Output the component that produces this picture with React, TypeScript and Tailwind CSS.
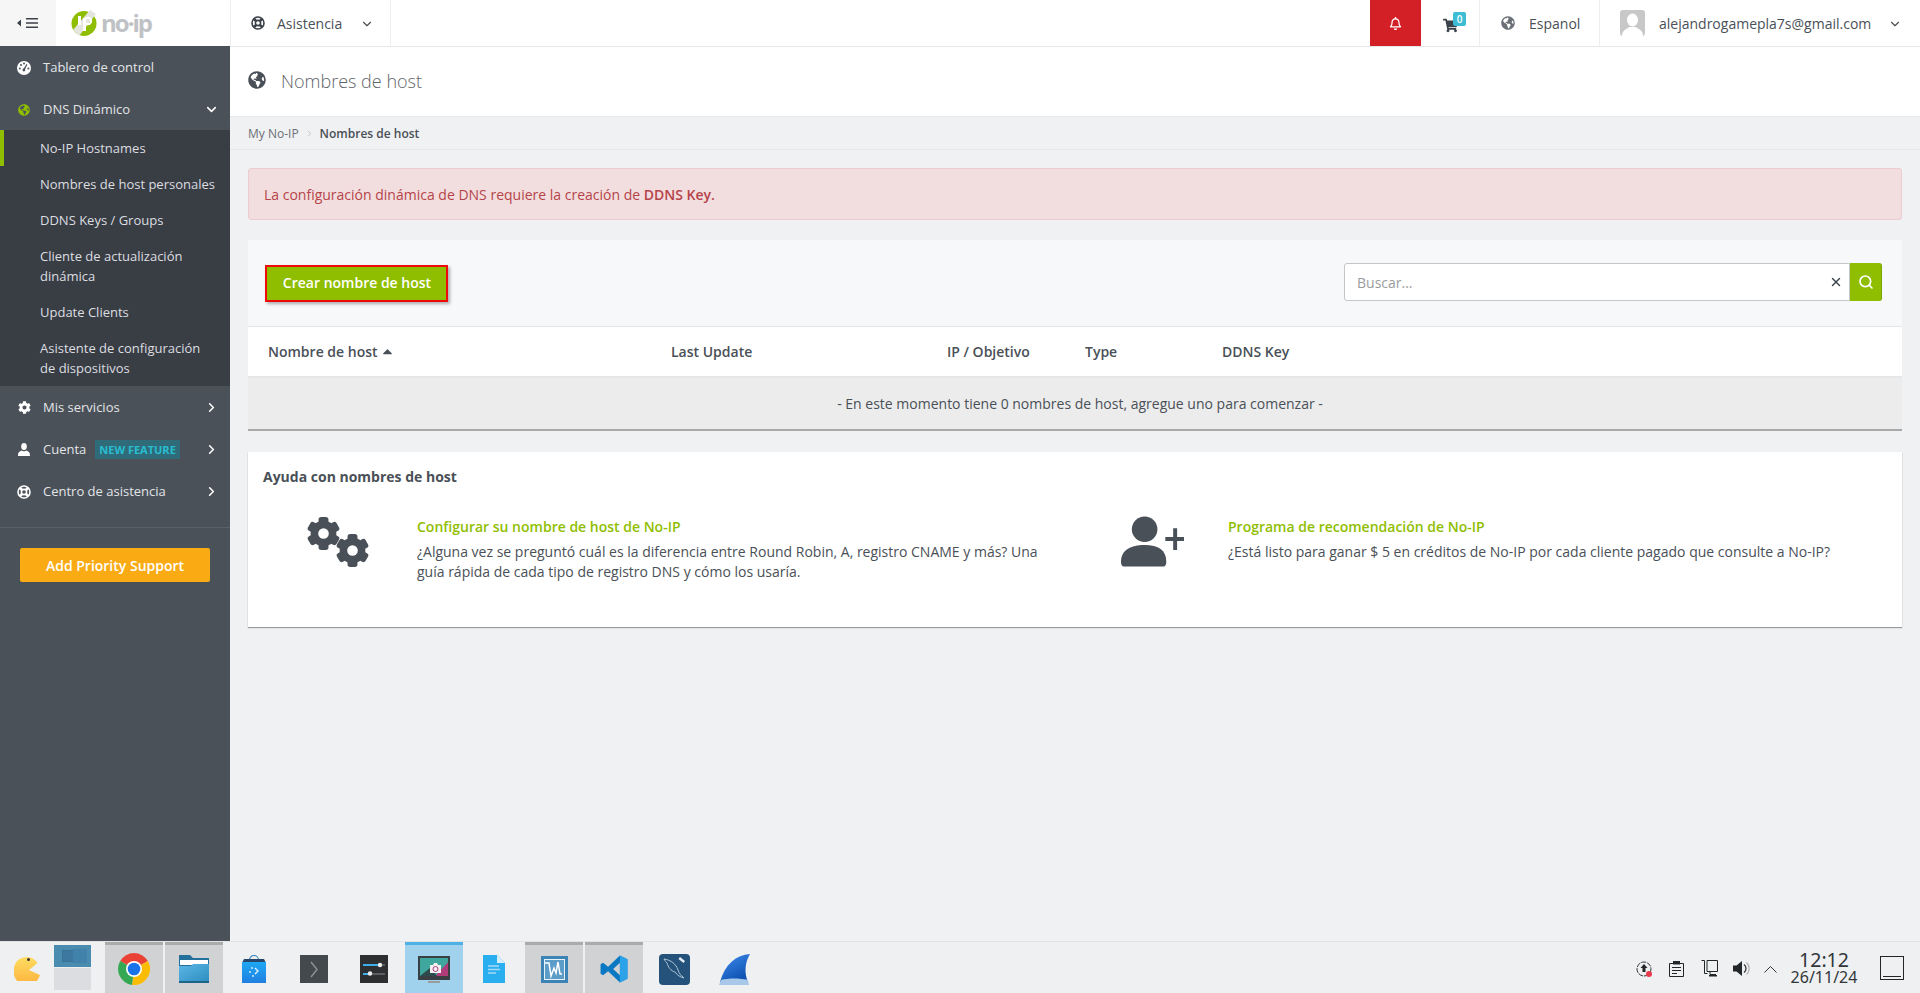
import { FaGlobeAmericas, FaCog, FaRegBell, FaShoppingCart, FaCaretUp } from 'react-icons/fa'
import { FiChevronDown, FiChevronRight, FiSearch, FiX } from 'react-icons/fi'

const subItems = [
  { label: 'No-IP Hostnames', active: true },
  { label: 'Nombres de host personales' },
  { label: 'DDNS Keys / Groups' },
  { label: 'Cliente de actualización dinámica', tall: true },
  { label: 'Update Clients' },
  { label: 'Asistente de configuración de dispositivos', tall: true },
]

function RingIcon({ size = 14 }: { size?: number }) {
  return (
    <svg width={size} height={size} viewBox="0 0 14 14" fill="none" stroke="currentColor">
      <circle cx="7" cy="7" r="6" strokeWidth="1.6" />
      <circle cx="7" cy="7" r="2.6" strokeWidth="1.6" />
      <path d="M3 3l2.200 2.200M11 3L8.800 5.200M3 11l2.200-2.200M11 11L8.800 8.800" strokeWidth="2.6" />
    </svg>
  )
}

function GaugeIcon() {
  return (
    <svg width="14" height="14" viewBox="0 0 14 14">
      <circle cx="7" cy="7" r="7" fill="currentColor" />
      <path d="M6.200 8.500L9.500 3l.9.5L7.600 9.200z" fill="#4a5159" />
      <circle cx="6.900" cy="9" r="1.400" fill="#4a5159" />
      <circle cx="2.800" cy="7.400" r="1" fill="#4a5159" />
      <circle cx="4" cy="4" r="1" fill="#4a5159" />
      <circle cx="7" cy="2.600" r="1" fill="#4a5159" />
      <circle cx="11.400" cy="7.400" r="1" fill="#4a5159" />
    </svg>
  )
}

function UserIcon() {
  return (
    <svg width="12" height="13" viewBox="0 0 12 13" fill="currentColor">
      <ellipse cx="6" cy="3.600" rx="2.800" ry="3.500" />
      <path d="M0 13c0-3 .6-4.500 3.600-5.600.8 1 4 1 4.800 0C11.400 8.500 12 10 12 13z" />
    </svg>
  )
}

function MenuRow({ icon, label, chevron, badge }: { icon: React.ReactNode, label: string, chevron?: 'down' | 'right', badge?: string }) {
  return (
    <div className="h-[42px] pt-[1px] flex items-center text-[13px] text-[#e3e5e7]">
      <div className="w-[43px] flex justify-center pl-[6px] pr-[1px] text-white">{icon}</div>
      <span>{label}</span>
      {badge && (
        <span className="ml-[9px] px-[4px] h-[19px] leading-[19px] bg-[#2f6b78] text-[#29bdd2] text-[11px] font-bold">{badge}</span>
      )}
      <div className="ml-auto mr-[11px] text-white">
        {chevron === 'down' && <FiChevronDown size={15} strokeWidth={2.5} />}
        {chevron === 'right' && <FiChevronRight size={15} strokeWidth={2.5} />}
      </div>
    </div>
  )
}

function Sidebar() {
  return (
    <aside className="w-[230px] shrink-0 bg-[#4a5159]">
      <MenuRow icon={<GaugeIcon />} label="Tablero de control" />
      <MenuRow icon={<FaGlobeAmericas size={12} className="text-[#8fbe00]" />} label="DNS Dinámico" chevron="down" />
      <div className="bg-[#393d44]">
        {subItems.map((item) => (
          <div
            key={item.label}
            className={`pr-[14px] text-[13px] leading-[20px] text-[#dcdee0] flex items-center ${item.tall ? 'h-[56px]' : 'h-[36px]'} ${item.active ? 'border-l-4 border-[#8fbe00] pl-[36px]' : 'pl-[40px]'}`}
          >
            {item.label}
          </div>
        ))}
      </div>
      <MenuRow icon={<FaCog size={13} />} label="Mis servicios" chevron="right" />
      <MenuRow icon={<UserIcon />} label="Cuenta" chevron="right" badge="NEW FEATURE" />
      <MenuRow icon={<RingIcon />} label="Centro de asistencia" chevron="right" />
      <div className="mt-[15px] border-t border-[#5a6169] px-[20px] pt-[20px]">
        <div className="h-[34px] pt-[1px] rounded-[2px] bg-[#faab14] text-white text-[14px] font-semibold flex items-center justify-center">
          Add Priority Support
        </div>
      </div>
    </aside>
  )
}

function Logo() {
  return (
    <div className="w-[174px] flex items-center pl-[15px]">
      <svg width="26" height="27" viewBox="0 0 26 27">
        <circle cx="13" cy="13.500" r="12.500" fill="#8fbe00" />
        <path d="M2 20 L19 0 L25 4 L8 26 Z" fill="#e4e6de" />
        <path d="M8.500 6v9M13.500 8v13" stroke="#fff" strokeWidth="3" />
        <circle cx="17" cy="11" r="3.200" fill="none" stroke="#fff" strokeWidth="2" />
      </svg>
      <span className="ml-[4px] text-[24px] leading-none tracking-[-2px] text-[#bfc2c5] font-bold">no·ip</span>
    </div>
  )
}

function Header() {
  return (
    <header className="h-[46px] shrink-0 flex bg-white text-[14px] text-[#4a5057]">
      <div className="w-[56px] bg-[#f6f6f6] flex items-center justify-center gap-[2px]">
        <svg width="22" height="12" viewBox="0 0 22 12">
          <path d="M0 6l4-3.500v7z M9 1h12v1.600H9z M9 5.200h12v1.600H9z M9 9.400h12v1.600H9z" fill="#3c424a" />
        </svg>
      </div>
      <Logo />
      <div className="w-[161px] border-x border-[#eeeeee] flex items-center pl-[20px]">
        <span className="text-[#3c424a]"><RingIcon /></span>
        <span className="ml-[12px]">Asistencia</span>
        <FiChevronDown size={14} className="ml-[18px] mt-[2px]" />
      </div>
      <div className="ml-auto w-[51px] bg-[#d32027] flex items-center justify-center text-white">
        <FaRegBell size={13} />
      </div>
      <div className="w-[59px] flex items-center justify-center border-r border-[#eeeeee] relative">
        <FaShoppingCart size={15} className="text-[#3c424a] mt-[4px]" />
        <span className="absolute left-[32px] top-[12px] w-[13px] h-[14px] rounded-[2px] bg-[#3dbcd4] text-white text-[10px] font-semibold leading-[14px] text-center">0</span>
      </div>
      <div className="w-[120px] border-r border-[#eeeeee] flex items-center pl-[21px]">
        <FaGlobeAmericas size={14} className="text-[#6b7076]" />
        <span className="ml-[14px]">Espanol</span>
      </div>
      <div className="w-[320px] flex items-center pl-[20px]">
        <div className="w-[25px] h-[26px] rounded-[3px] bg-[#c8c8c8] overflow-hidden">
          <svg width="25" height="26" viewBox="0 0 25 26">
            <ellipse cx="12.500" cy="10" rx="5.500" ry="6.500" fill="#fff" />
            <path d="M2 26c0-6 5-7 7-9h7c2 2 7 3 7 9z" fill="#fff" />
          </svg>
        </div>
        <span className="ml-[14px]">alejandrogamepla7s@gmail.com</span>
        <FiChevronDown size={14} className="ml-[17px] mt-[2px]" />
      </div>
    </header>
  )
}

function Gear({ cx, cy, r }: { cx: number, cy: number, r: number }) {
  return (
    <g fill="#4a5057">
      <circle cx={cx} cy={cy} r={r * 0.78} />
      {[0, 60, 120, 180, 240, 300].map((deg) => (
        <rect key={deg} x={cx - r * 0.3} y={cy - r} width={r * 0.6} height={r * 0.5} rx={r * 0.16} transform={`rotate(${deg} ${cx} ${cy})`} />
      ))}
      <circle cx={cx} cy={cy} r={r * 0.32} fill="#fff" />
    </g>
  )
}

function HostTable() {
  return (
    <div className="mt-[20px]">
      <div className="h-[87px] bg-[#f7f8fa] border-b border-[#e4e5e7] flex items-center justify-between pl-[17px] pr-[20px]">
        <button className="w-[183px] h-[37px] pb-[2px] pl-[1px] bg-[#8fbe00] border-2 border-[#ee0a0a] text-white text-[14px] font-semibold shadow-[2px_2px_3px_rgba(0,0,0,0.3)]">
          Crear nombre de host
        </button>
        <div className="flex h-[38px] w-[538px] -mt-[2px]">
          <div className="flex-1 flex items-center bg-white border border-[#c4c6c8] rounded-l-[3px] pl-[12px] pr-[6px] text-[14px] text-[#9a9c9e]">
            Buscar...
            <FiX size={14} strokeWidth={2.5} className="ml-auto text-[#3c424a]" />
          </div>
          <div className="w-[32px] bg-[#8fbe00] rounded-r-[3px] border-r border-[#7da600] flex items-center justify-center text-white">
            <FiSearch size={16} strokeWidth={2.5} />
          </div>
        </div>
      </div>
      <div className="h-[51px] bg-white border-b-2 border-[#e6e7e8] flex items-center pl-[20px] text-[14px] font-semibold text-[#4a5057]">
        <div className="w-[403px] flex items-center gap-[2px]">Nombre de host <FaCaretUp size={15} /></div>
        <div className="w-[276px]">Last Update</div>
        <div className="w-[138px]">IP / Objetivo</div>
        <div className="w-[137px]">Type</div>
        <div>DDNS Key</div>
      </div>
      <div className="h-[53px] pl-[10px] bg-[#ececec] flex items-center justify-center text-[14px] text-[#4a5057] border-b-2 border-[#a8a9aa]">
        - En este momento tiene 0 nombres de host, agregue uno para comenzar -
      </div>
    </div>
  )
}

function HelpCard() {
  return (
    <div className="mt-[21px] h-[175px] bg-white px-[15px] pt-[16px] shadow-[0_1px_1px_rgba(0,0,0,0.35)]">
      <h3 className="text-[14px] leading-[18px] font-bold text-[#4a5057]">Ayuda con nombres de host</h3>
      <div className="flex mt-[31px]">
        <div className="w-[812px] flex">
          <div className="w-[153px] pl-[44px] -mt-[1px]">
            <svg width="64" height="52" viewBox="0 0 64 52">
              <Gear cx={16.5} cy={17.5} r={16.5} />
              <Gear cx={45.5} cy={34.5} r={16.5} />
            </svg>
          </div>
          <div className="w-[640px] pl-[1px] text-[14px] leading-[20px] text-[#4a5057]">
            <div className="text-[#8fbe00] font-semibold mb-[5px]">Configurar su nombre de host de No-IP</div>
            ¿Alguna vez se preguntó cuál es la diferencia entre Round Robin, A, registro CNAME y más? Una guía rápida de cada tipo de registro DNS y cómo los usaría.
          </div>
        </div>
        <div className="flex-1 flex">
          <div className="w-[153px] pl-[46px] -mt-[1px]">
            <svg width="63" height="52" viewBox="0 0 64 52" fill="#4a5057">
              <circle cx="24" cy="13" r="13" />
              <path d="M0 46c0-12 10-17 24-17s22 5 22 17c0 3-1 5-3 5H3c-2 0-3-2-3-5z" />
              <path d="M53 12h4v9h7v4h-7v9h-4v-9h-8v-4h8z" />
            </svg>
          </div>
          <div className="text-[14px] leading-[20px] text-[#4a5057]">
            <div className="text-[#8fbe00] font-semibold mb-[5px]">Programa de recomendación de No-IP</div>
            ¿Está listo para ganar $ 5 en créditos de No-IP por cada cliente pagado que consulte a No-IP?
          </div>
        </div>
      </div>
    </div>
  )
}

function Tile({ children, state }: { children: React.ReactNode, state?: 'open' | 'active' }) {
  const cls =
    state === 'active'
      ? 'bg-[#a0d2ee] border-t-[3px] border-[#4fb0e6]'
      : state === 'open'
        ? 'bg-[#d1d2d4] border-t-[3px] border-[#aaabac]'
        : 'border-t-[3px] border-transparent'
  return <div className={`w-[58px] mr-[2px] flex items-center justify-center ${cls}`}>{children}</div>
}

function Taskbar() {
  return (
    <footer className="h-[52px] shrink-0 bg-[#eff0f1] border-t border-[#e2e3e4] flex items-stretch font-['Noto_Sans',sans-serif] text-[#31363b]">
      <div className="w-[54px] flex items-center justify-center pl-[0px]">
        <svg width="26" height="27" viewBox="0 0 26 27">
          <defs>
            <linearGradient id="pac" x1="0" y1="0" x2="0" y2="1">
              <stop offset="0" stopColor="#ffdc62" />
              <stop offset="1" stopColor="#fbb23c" />
            </linearGradient>
          </defs>
          <path d="M23.500 9 A 13 13.500 0 0 0 0 13.500 A 13 13.500 0 0 0 26 21 L15 16 Z" fill="url(#pac)" />
          <circle cx="14.500" cy="5.500" r="1.500" fill="#333" />
        </svg>
      </div>
      <div className="w-[37px] mr-[14px] py-[3px] flex flex-col gap-[1px]">
        <div className="flex-1 bg-[#4a8bb0] relative">
          <div className="absolute left-[8px] top-[5px] w-[20px] h-[12px] bg-[#3c78a0] border border-[#3b7097]" />
          <div className="absolute left-[19px] top-[4px] w-[14px] h-[14px] bg-[#4182aa]" />
        </div>
        <div className="flex-1 bg-[#dcdde0]" />
      </div>
      <Tile state="open">
        <svg width="32" height="32" viewBox="0 0 32 32">
          <path d="M16 16L2.200 8A16 16 0 0 1 29.800 8z" fill="#ea4335" />
          <path d="M16 16L29.800 8A16 16 0 0 1 14 31.900z" fill="#fbbc05" />
          <path d="M16 16L14 31.900A16 16 0 0 1 2.200 8z" fill="#34a853" />
          <circle cx="16" cy="16" r="8" fill="#fff" />
          <circle cx="16" cy="16" r="6.300" fill="#1a73e8" />
        </svg>
      </Tile>
      <Tile state="open">
        <svg width="30" height="28" viewBox="0 0 30 28">
          <defs>
            <linearGradient id="fold" x1="0" y1="0" x2="1" y2="1">
              <stop offset="0" stopColor="#5cb6e8" />
              <stop offset="1" stopColor="#2f8fc0" />
            </linearGradient>
          </defs>
          <path d="M0 0h11l3 3h16v25H0z" fill="#23709a" />
          <rect x="1" y="5" width="28" height="5" fill="#fff" />
          <path d="M0 11h12l2-2h16v17H0z" fill="url(#fold)" />
          <rect y="26" width="30" height="2" fill="#1d6488" />
        </svg>
      </Tile>
      <Tile>
        <svg width="24" height="28" viewBox="0 0 24 28">
          <defs>
            <linearGradient id="bag" x1="0" y1="0" x2="0" y2="1">
              <stop offset="0" stopColor="#1ea8f4" />
              <stop offset="1" stopColor="#1f7fe0" />
            </linearGradient>
          </defs>
          <path d="M7.500 5a4.500 4.500 0 0 1 9 0" fill="none" stroke="#3a86c0" strokeWidth="1.200" />
          <path d="M2 4h20l2 4H0z" fill="#26476b" />
          <rect x="0" y="7" width="24" height="21" fill="url(#bag)" />
          <path d="M13 13l3 3-3 3" fill="none" stroke="#dff2ff" strokeWidth="1.400" />
          <circle cx="10" cy="13" r=".9" fill="#dff2ff" />
          <circle cx="8" cy="17" r=".9" fill="#dff2ff" />
          <circle cx="11" cy="21" r=".9" fill="#dff2ff" />
        </svg>
      </Tile>
      <Tile>
        <svg width="28" height="28" viewBox="0 0 28 28">
          <rect width="28" height="28" fill="#43494c" />
          <path d="M11 7l6 7.500-6 7.500" fill="none" stroke="#8b9094" strokeWidth="1.500" />
        </svg>
      </Tile>
      <Tile>
        <svg width="28" height="28" viewBox="0 0 28 28">
          <rect width="28" height="28" fill="#2d2f31" />
          <path d="M3 10h17M3 19h6" stroke="#3daee9" strokeWidth="1.800" />
          <path d="M20 10h5M9 19h16" stroke="#5a5e62" strokeWidth="1.800" />
          <circle cx="20" cy="10" r="2.200" fill="#eee" />
          <circle cx="10" cy="18.500" r="2.200" fill="#eee" />
        </svg>
      </Tile>
      <Tile state="active">
        <svg width="32" height="27" viewBox="0 0 32 27">
          <rect width="32" height="24" fill="#3a3f44" />
          <rect x="2" y="2" width="28" height="18" fill="#3fa79d" />
          <path d="M17 20L30 6v14z" fill="#b03c7a" />
          <path d="M14 2h16v4L17 20h-2z" fill="#3fa79d" />
          <path d="M2 20l10-8 7 8z" fill="#2e4a4c" />
          <path d="M12 9h3l1-2h3l1 2h3v8H12z" fill="#f4f0f2" />
          <circle cx="17.500" cy="13" r="2.500" fill="none" stroke="#b03c7a" />
          <rect x="10" y="25" width="12" height="2" fill="#9a9c9e" />
        </svg>
      </Tile>
      <Tile>
        <svg width="22" height="28" viewBox="0 0 22 28">
          <path d="M0 0h14l8 8v20H0z" fill="#29aef0" />
          <path d="M14 0l8 8h-8z" fill="#d6f0fb" />
          <path d="M5 11h11M5 14.500h12M5 18h8" stroke="#a5dcf7" strokeWidth="1.300" />
        </svg>
      </Tile>
      <Tile state="open">
        <svg width="27" height="27" viewBox="0 0 27 27">
          <rect width="27" height="27" fill="#3d84b6" />
          <rect x="3.500" y="3.500" width="20" height="20" fill="#5b9cc8" stroke="#e6f1f8" strokeWidth="1" />
          <path d="M4 7h4l2 13 3-8 2 5 2-11 2 12 2 0" fill="none" stroke="#fff" strokeWidth="1.500" />
        </svg>
      </Tile>
      <Tile state="open">
        <svg width="28" height="28" viewBox="0 0 100 100">
          <path d="M71 2l27 13v70l-27 13-42-40-18 14-9-5V33l9-5 18 14zM71 28L47 50l24 22z" fill="#0a78c2" />
          <path d="M71 2l27 13v70l-27 13z" fill="#2ca3e8" />
        </svg>
      </Tile>
      <Tile>
        <svg width="31" height="31" viewBox="0 0 31 31">
          <rect width="31" height="31" rx="4" fill="#24527a" />
          <path d="M5 5c7 1 12 5 14 11 1 3 3 6 6 8-4-1-7-3-9-6-4-1-7-5-8-9-1-1-2-2-3-4z" fill="none" stroke="#b9cfdf" strokeWidth="0.9" />
          <path d="M21 3l5 4-1.500 2-5-4z" fill="#e6eef4" />
        </svg>
      </Tile>
      <Tile>
        <svg width="31" height="31" viewBox="0 0 31 31">
          <defs>
            <linearGradient id="fin" x1="0" y1="0" x2="0.6" y2="1">
              <stop offset="0" stopColor="#3f8ff0" />
              <stop offset="1" stopColor="#0e4fb0" />
            </linearGradient>
          </defs>
          <path d="M31 0C17 1 6 10 1 28h28c-4-9-3-20 2-28z" fill="url(#fin)" />
          <path d="M0 31l2-5c8-2 18-2 27 0l1 5z" fill="#a8c8ea" />
        </svg>
      </Tile>

      <div className="ml-auto flex items-center">
        <svg width="16" height="16" viewBox="0 0 16 16" className="mr-[17px] mt-[2px]">
          <circle cx="8" cy="8" r="7" fill="none" stroke="#31363b" strokeWidth="1" strokeDasharray="5 1" />
          <path d="M8 3l3.500 4H9.500v4h-3V7H4.500z" fill="#232629" />
          <circle cx="13" cy="13" r="3" fill="#e83a4c" />
        </svg>
        <svg width="15" height="16" viewBox="0 0 15 16" className="mr-[17px] mt-[2px]">
          <path d="M.5 2.500h14v13H.5z" fill="none" stroke="#232629" />
          <path d="M4 0h7v3.500H4z M3 6h9v1H3z M3 9h9v1H3z M3 12h5v1H3z" fill="#232629" />
        </svg>
        <svg width="17" height="17" viewBox="0 0 17 17" className="mr-[15px] mt-[2px]">
          <path d="M6 .5h10.500v11H6z M9 11.500v3h6" fill="none" stroke="#232629" />
          <path d="M.5 .5h3v13h3" fill="none" stroke="#232629" />
          <path d="M8 15h8v1.500H8z" fill="#232629" />
        </svg>
        <svg width="17" height="17" viewBox="0 0 17 17" className="mr-[14px] mt-[2px]">
          <path d="M0 5.500h3.500L9 1v15l-5.500-4.500H0z" fill="#232629" />
          <path d="M11 4.500a5 5 0 0 1 0 8" fill="none" stroke="#31363b" strokeWidth="1.300" />
          <path d="M13.500 2.500a8 8 0 0 1 0 12" fill="none" stroke="#b0b2b4" strokeWidth="1.300" />
        </svg>
        <svg width="13" height="8" viewBox="0 0 13 8" className="mr-[13px] mt-[2px]">
          <path d="M.5 7.500l6-6 6 6" fill="none" stroke="#31363b" />
        </svg>
        <div className="w-[68px] flex flex-col items-center pt-[1px]">
          <span className="text-[19.5px] leading-[19px]">12:12</span>
          <span className="text-[16px] leading-[17px]">26/11/24</span>
        </div>
        <div className="w-[24px] h-[24px] ml-[22px] mr-[16px] border border-[#232629] flex items-end justify-center pb-[2px]">
          <div className="w-[18px] h-px bg-[#232629]" />
        </div>
      </div>
    </footer>
  )
}

export default function App() {
  return (
    <div className="h-screen flex flex-col overflow-hidden bg-[#f0f1f3] font-['Open_Sans',sans-serif]">
      <Header />
      <div className="flex-1 flex min-h-0">
        <Sidebar />
        <main className="flex-1">
          <div className="h-[71px] bg-white border-y border-[#e6e7e8] flex items-center pl-[18px]">
            <FaGlobeAmericas size={18} className="text-[#4a5057] -mt-[3px]" />
            <h1 className="ml-[15px] text-[18px] text-[#5f6469] font-light">Nombres de host</h1>
          </div>
          <div className="h-[33px] border-b border-[#e6e7e8] flex items-center pl-[18px] pt-[1px] text-[12px] text-[#6b7076]">
            My No-IP
            <FiChevronRight size={9} className="mx-[6px] text-[#b5b7b9]" />
            <span className="font-semibold text-[#4a5057]">Nombres de host</span>
          </div>
          <div className="px-[18px] pt-[18px]">
            <div className="h-[52px] bg-[#f2dede] border border-[#ebccd1] rounded-[3px] flex items-center pl-[15px] text-[14px] text-[#b5444a]">
              <span>La configuración dinámica de DNS requiere la creación de <b className="font-semibold">DDNS Key.</b></span>
            </div>
            <HostTable />
            <HelpCard />
          </div>
        </main>
      </div>
      <Taskbar />
    </div>
  )
}
